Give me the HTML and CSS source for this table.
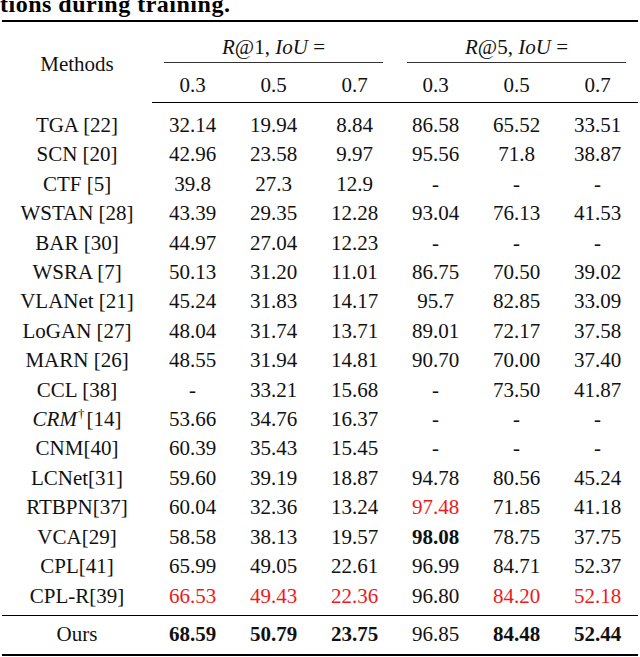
FILE: index.html
```html
<!DOCTYPE html>
<html>
<head>
<meta charset="utf-8">
<link rel="stylesheet" href="styles.css">
</head>
<body>
<div class="caption">tions during training.</div>
<table class="results">
  <colgroup>
    <col class="c-method">
    <col class="c-num"><col class="c-num"><col class="c-num">
    <col class="c-num"><col class="c-num"><col class="c-num">
  </colgroup>
  <thead>
    <tr class="h1">
      <th rowspan="2" class="methods">Methods</th>
      <th colspan="3"><div class="cmid"><i>R</i>@1, <i>IoU</i> =</div></th>
      <th colspan="3"><div class="cmid"><i>R</i>@5, <i>IoU</i> =</div></th>
    </tr>
    <tr class="h2">
      <th>0.3</th><th>0.5</th><th>0.7</th>
      <th>0.3</th><th>0.5</th><th>0.7</th>
    </tr>
  </thead>
  <tbody>
    <tr class="first"><td>TGA [22]</td><td>32.14</td><td>19.94</td><td>8.84</td><td>86.58</td><td>65.52</td><td>33.51</td></tr>
    <tr><td>SCN [20]</td><td>42.96</td><td>23.58</td><td>9.97</td><td>95.56</td><td>71.8</td><td>38.87</td></tr>
    <tr><td>CTF [5]</td><td>39.8</td><td>27.3</td><td>12.9</td><td>-</td><td>-</td><td>-</td></tr>
    <tr><td>WSTAN [28]</td><td>43.39</td><td>29.35</td><td>12.28</td><td>93.04</td><td>76.13</td><td>41.53</td></tr>
    <tr><td>BAR [30]</td><td>44.97</td><td>27.04</td><td>12.23</td><td>-</td><td>-</td><td>-</td></tr>
    <tr><td>WSRA [7]</td><td>50.13</td><td>31.20</td><td>11.01</td><td>86.75</td><td>70.50</td><td>39.02</td></tr>
    <tr><td>VLANet [21]</td><td>45.24</td><td>31.83</td><td>14.17</td><td>95.7</td><td>82.85</td><td>33.09</td></tr>
    <tr><td>LoGAN [27]</td><td>48.04</td><td>31.74</td><td>13.71</td><td>89.01</td><td>72.17</td><td>37.58</td></tr>
    <tr><td>MARN [26]</td><td>48.55</td><td>31.94</td><td>14.81</td><td>90.70</td><td>70.00</td><td>37.40</td></tr>
    <tr><td>CCL [38]</td><td>-</td><td>33.21</td><td>15.68</td><td>-</td><td>73.50</td><td>41.87</td></tr>
    <tr><td><i>CRM</i><sup>†</sup>[14]</td><td>53.66</td><td>34.76</td><td>16.37</td><td>-</td><td>-</td><td>-</td></tr>
    <tr><td>CNM[40]</td><td>60.39</td><td>35.43</td><td>15.45</td><td>-</td><td>-</td><td>-</td></tr>
    <tr><td>LCNet[31]</td><td>59.60</td><td>39.19</td><td>18.87</td><td>94.78</td><td>80.56</td><td>45.24</td></tr>
    <tr><td>RTBPN[37]</td><td>60.04</td><td>32.36</td><td>13.24</td><td class="red">97.48</td><td>71.85</td><td>41.18</td></tr>
    <tr><td>VCA[29]</td><td>58.58</td><td>38.13</td><td>19.57</td><td class="best">98.08</td><td>78.75</td><td>37.75</td></tr>
    <tr><td>CPL[41]</td><td>65.99</td><td>49.05</td><td>22.61</td><td>96.99</td><td>84.71</td><td>52.37</td></tr>
    <tr class="last"><td>CPL-R[39]</td><td class="red">66.53</td><td class="red">49.43</td><td class="red">22.36</td><td>96.80</td><td class="red">84.20</td><td class="red">52.18</td></tr>
  </tbody>
  <tfoot>
    <tr class="ours"><td>Ours</td><td class="best">68.59</td><td class="best">50.79</td><td class="best">23.75</td><td>96.85</td><td class="best">84.48</td><td class="best">52.44</td></tr>
  </tfoot>
</table>
</body>
</html>
```

FILE: styles.css
```css
html, body {
  margin: 0;
  padding: 0;
  background: #ffffff;
}
body {
  font-family: "Liberation Serif", "Times New Roman", serif;
  color: #000000;
  width: 640px;
  height: 657px;
  overflow: hidden;
}
.caption {
  font-weight: bold;
  font-size: 24px;
  line-height: 24px;
  letter-spacing: 0.5px;
  height: 24px;
  margin-top: -8px;
  margin-bottom: 4px;
  white-space: nowrap;
}
.results {
  border-collapse: collapse;
  table-layout: fixed;
  width: 636px;
  margin-left: 2px;
  font-family: "Liberation Serif", "Times New Roman", serif;
  font-size: 21px;
  color: #111111;
  border-top: 2px solid #000;
  border-bottom: 2px solid #000;
}
.c-method { width: 150px; }
.c-num { width: 81px; }
.results th,
.results td {
  padding: 0;
  text-align: center;
  font-weight: normal;
  white-space: nowrap;
  line-height: 29px;
}
.results .h1 th {
  height: 40px;
  vertical-align: top;
}
.cmid {
  margin: 0 12px;
  padding-top: 11px;
  border-bottom: 1px solid #333;
}
.results .h1 th.methods {
  vertical-align: middle;
  padding-top: 4px;
}
.results .h2 th {
  padding-top: 8px;
  padding-bottom: 2px;
  border-bottom: 1px solid #000;
}
.results tbody td {
  height: 29.4px;
  line-height: 29.4px;
}
.results tbody tr.first td {
  padding-top: 8px;
}
.results tbody tr.last td {
  padding-bottom: 4px;
}
.results .ours td {
  border-top: 1px solid #000;
  padding-top: 4px;
  padding-bottom: 5px;
}
.results td.red {
  color: #f01818;
}
.results td.best {
  font-weight: bold;
}
.results sup {
  font-size: 13px;
  line-height: 0;
  vertical-align: 8px;
  margin: 0 2px 0 1px;
}
```
